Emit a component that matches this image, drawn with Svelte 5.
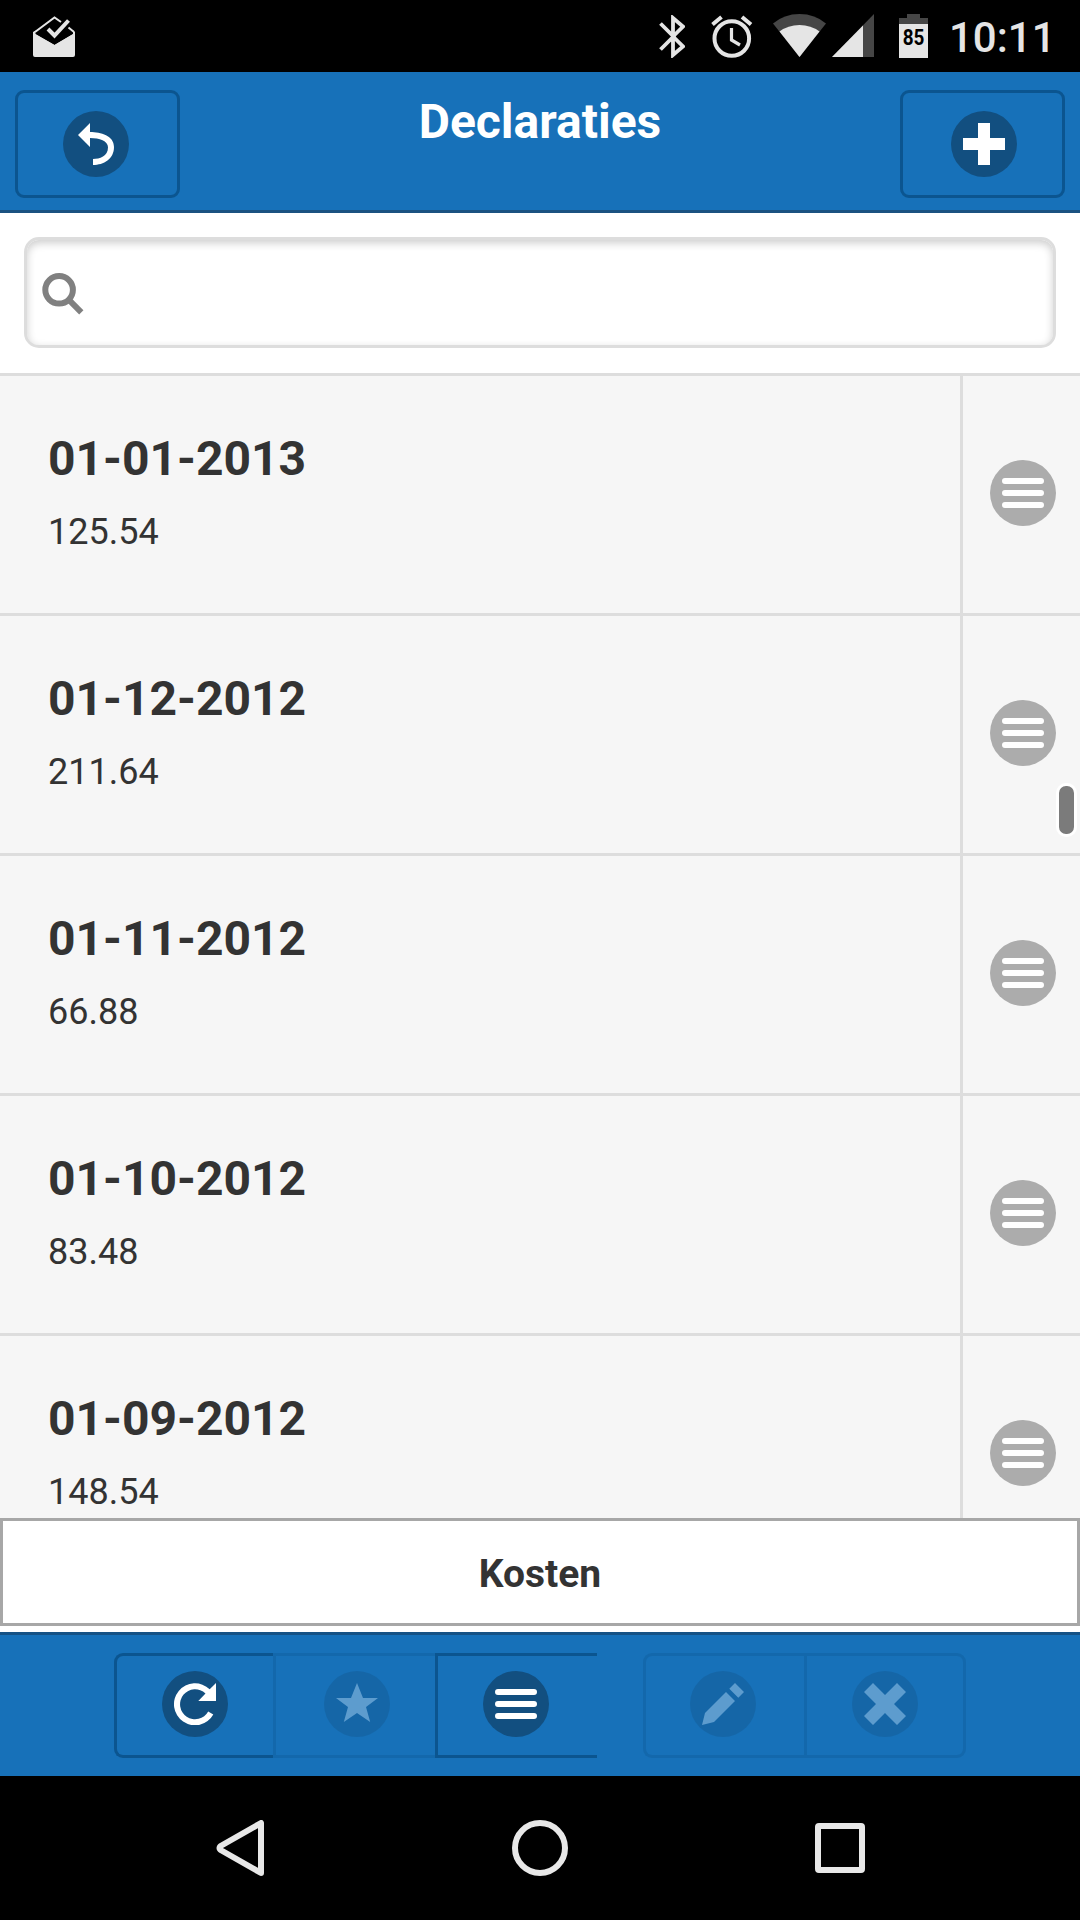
<script lang="ts">
  interface Declaration {
    date: string;
    amount: string;
  }

  const declarations: Declaration[] = [
    { date: '01-01-2013', amount: '125.54' },
    { date: '01-12-2012', amount: '211.64' },
    { date: '01-11-2012', amount: '66.88' },
    { date: '01-10-2012', amount: '83.48' },
    { date: '01-09-2012', amount: '148.54' },
  ];

  // all paths are drawn on a 14x14 grid
  const icons = {
    back: 'M5,3V0L1,4l4,4V5c3.2,0,6,1,6,3.1C11,11.2,8.2,12,6,12v2c3.6,0,7-2,7-6C13,4.2,8.6,3,5,3z',
    plus: 'M14,5H9V0H5v5H0v4h5v5h4V9h5z',
    bars: 'M1,4h12a1,1,0,0,0,0-2H1a1,1,0,0,0,0,2z M13,6H1a1,1,0,0,0,0,2h12a1,1,0,0,0,0-2z M13,10H1a1,1,0,0,0,0,2h12a1,1,0,0,0,0-2z',
    refresh: 'M14,0l-2.1,2.1A7,7,0,1,0,13.1,10.5l-1.7-1A5,5,0,1,1,10.5,3.5L8.1,6H14z',
    star: 'M14,5H9L7,0L5,5H0l4,3l-1.4,5L7,10l4.4,3L10,8z',
    edit: 'M1,10l-1,4l4-1l7-7L8,3z M11,0L9.1,1.9l3,3L14,3z',
    remove: 'M14,3l-3-3L7,4L3,0L0,3l4,4l-4,4l3,3l4-4l4,4l3-3l-4-4z',
  };

  type IconName = keyof typeof icons;

  let query = $state('');

  let visible = $derived(
    declarations.filter((d) => d.date.includes(query) || d.amount.includes(query))
  );
</script>

{#snippet icon(name: IconName)}
  <span class="disc">
    <svg viewBox="0 0 14 14" aria-hidden="true"><path d={icons[name]} /></svg>
  </span>
{/snippet}

<div class="screen">
  <div class="status-bar">
    <svg class="mail" viewBox="0 0 42 42" aria-hidden="true">
      <path d="M0 17 21.500 29 42 17V39q0 2-2 2H2q-2 0-2-2z" />
      <path d="M2 16 21.500 1.500 28 6M35.500 11.500 41 16" fill="none" stroke="#e5e5e5" stroke-width="2" />
      <path d="M0 16 2.500 14.500 2.500 18 21.500 29 40 18 40 14.500 42 16V30H0z" />
      <path d="M15 13 21.500 19.500 35.500 4.500" fill="none" stroke="#e5e5e5" stroke-width="4" />
    </svg>
    <span class="spacer"></span>
    <svg class="bluetooth" viewBox="0 0 26 43" aria-hidden="true">
      <path d="M1.500 8.500 14.500 21.500 1.500 34.500M14 21.500 24 11.500 14 3V40L24 31.500 14 21.500" fill="none" stroke="#e5e5e5" stroke-width="3.800" />
    </svg>
    <svg class="alarm" viewBox="0 0 42 43" aria-hidden="true">
      <circle cx="20.800" cy="23.500" r="17.300" fill="none" stroke="#e5e5e5" stroke-width="4" />
      <path d="M1.500 9.500 10.500 2M31 2 40 9.500" stroke="#e5e5e5" stroke-width="4" />
      <path d="M20.500 13V25L29 30" fill="none" stroke="#e5e5e5" stroke-width="3.200" />
    </svg>
    <svg class="wifi" viewBox="0 0 53 43" aria-hidden="true">
      <path class="dim" d="M26.500 43 0 9.500Q11 0 26.500 0T53 9.500z" />
      <path d="M26.500 43 6.500 17.500Q15 11 26.500 11T46.500 17.500z" />
    </svg>
    <svg class="signal" viewBox="0 0 42 43" aria-hidden="true">
      <path class="dim" d="M42 0V43H0z" />
      <path d="M31 11.500V43H0z" />
    </svg>
    <div class="battery">
      <svg viewBox="0 0 29 44" aria-hidden="true">
        <path class="dim" d="M0 10V4H8V0H21V4H29V10z" />
        <path d="M0 10H29V44H0z" />
      </svg>
      <span>85</span>
    </div>
    <time>10:11</time>
  </div>

  <header>
    <button class="header-btn" aria-label="Terug">{@render icon('back')}</button>
    <h1>Declaraties</h1>
    <button class="header-btn add" aria-label="Toevoegen">{@render icon('plus')}</button>
  </header>

  <div class="search">
    <label>
      <svg viewBox="0 0 14 14" aria-hidden="true">
        <circle cx="5.700" cy="5.600" r="4.600" />
        <path d="M8.900 8.900 13.100 13.100" />
      </svg>
      <input type="text" aria-label="Zoeken" bind:value={query} />
    </label>
  </div>

  <div class="list-wrap">
    <ul>
      {#each visible as item (item.date)}
        <li>
          <div class="details">
            <h2>{item.date}</h2>
            <p>{item.amount}</p>
          </div>
          <button class="row-menu" aria-label="Menu">{@render icon('bars')}</button>
        </li>
      {/each}
    </ul>
    <div class="scroll-thumb"></div>
  </div>

  <div class="tab-wrap">
    <button class="tab">Kosten</button>
  </div>

  <footer>
    <div class="group">
      <button class="tool refresh" aria-label="Vernieuwen">{@render icon('refresh')}</button>
      <button class="tool favorite" disabled aria-label="Favoriet">{@render icon('star')}</button>
      <button class="tool" aria-label="Menu">{@render icon('bars')}</button>
    </div>
    <div class="group">
      <button class="tool edit" disabled aria-label="Bewerken">{@render icon('edit')}</button>
      <button class="tool remove" disabled aria-label="Verwijderen">{@render icon('remove')}</button>
    </div>
  </footer>

  <nav>
    <svg viewBox="0 0 56 56" aria-hidden="true">
      <path d="M45 3V53L5.500 30.500Q1.500 28 5.500 25.500z" />
    </svg>
    <svg viewBox="0 0 56 56" aria-hidden="true">
      <circle cx="28" cy="28" r="25" />
    </svg>
    <svg class="recent" viewBox="0 0 56 56" aria-hidden="true">
      <rect x="6" y="6" width="44" height="44" rx="1" />
    </svg>
  </nav>
</div>

<style>
  :global(body) {
    margin: 0;
  }

  .screen {
    display: flex;
    flex-direction: column;
    width: 1080px;
    height: 1920px;
    overflow: hidden;
    background: #fff;
    color: #333;
    font-family: Roboto, sans-serif;
  }

  .screen * {
    box-sizing: border-box;
  }

  svg {
    display: block;
    flex: none;
  }

  button {
    margin: 0;
    padding: 0;
    background: none;
    font: inherit;
    color: inherit;
  }

  .status-bar {
    display: flex;
    flex: none;
    align-items: flex-start;
    height: 72px;
    padding: 14px 31px 0 33px;
    background: #000;
    fill: #e5e5e5;
  }

  .spacer {
    flex: 1;
  }

  .dim {
    fill: #464646;
  }

  .mail {
    width: 42px;
    height: 42px;
    margin-top: 2px;
  }

  .bluetooth {
    width: 26px;
    height: 43px;
    margin: 1px 26px 0 0;
  }

  .alarm {
    width: 42px;
    height: 43px;
    margin: 1px 20px 0 0;
  }

  .wifi {
    width: 53px;
    height: 43px;
    margin-right: 6px;
  }

  .signal {
    width: 42px;
    height: 43px;
    margin-right: 25px;
  }

  .battery {
    position: relative;
    width: 29px;
    height: 44px;
    margin-right: 21px;
  }

  .battery span {
    position: absolute;
    inset: 11px 0 auto;
    font-size: 22px;
    font-weight: 700;
    line-height: 25px;
    text-align: center;
    color: #000;
    transform: scaleX(0.86);
  }

  time {
    width: 100px;
    margin-top: 1px;
    font-size: 42px;
    font-weight: 500;
    line-height: 46px;
    color: #e5e5e5;
    white-space: nowrap;
  }

  header {
    display: flex;
    flex: none;
    justify-content: space-between;
    height: 141px;
    padding: 18px 15px 0;
    background: #1771b9;
    border-bottom: 3px solid #1b5281;
  }

  h1 {
    margin: 4px 0 0;
    font-size: 48px;
    font-weight: 700;
    line-height: 56px;
    color: #fff;
  }

  .header-btn {
    display: flex;
    align-items: center;
    width: 165px;
    height: 108px;
    padding-left: 45px;
    border: 3px solid #0b5590;
    border-radius: 9px;
  }

  .header-btn.add {
    padding-left: 48px;
  }

  .disc {
    display: flex;
    flex: none;
    align-items: center;
    justify-content: center;
    width: 66px;
    height: 66px;
    border-radius: 50%;
    background: #124f80;
  }

  .disc svg {
    width: 42px;
    height: 42px;
    fill: #fff;
  }

  .search {
    flex: none;
    height: 160px;
    padding: 24px 24px 0;
  }

  .search label {
    display: flex;
    align-items: center;
    height: 111px;
    padding-left: 15px;
    border: 3px solid #ddd;
    border-radius: 15px;
    box-shadow: inset 0 3px 9px rgba(0, 0, 0, 0.2);
  }

  .search svg {
    width: 42px;
    height: 42px;
    margin-top: 3px;
    fill: none;
    stroke: #808080;
    stroke-width: 2;
  }

  .search input {
    flex: 1;
    height: 90px;
    padding: 0 18px;
    border: 0;
    outline: 0;
    background: none;
    font: inherit;
    font-size: 48px;
  }

  .list-wrap {
    position: relative;
    flex: none;
    height: 1145px;
    overflow: hidden;
  }

  ul {
    margin: 0;
    padding: 0;
    list-style: none;
  }

  li {
    display: flex;
    height: 240px;
    border-top: 3px solid #ddd;
    background: #f6f6f6;
  }

  .details {
    flex: 1;
    padding: 55px 48px 0;
  }

  h2 {
    margin: 0;
    font-size: 48px;
    font-weight: 700;
    line-height: 56px;
  }

  p {
    margin: 24px 0 0;
    font-size: 36px;
    line-height: 42px;
  }

  .row-menu {
    display: flex;
    align-items: center;
    width: 120px;
    padding: 0 0 3px 27px;
    border: 0;
    border-left: 3px solid #ddd;
  }

  .row-menu .disc {
    background: #acacac;
  }

  .scroll-thumb {
    position: absolute;
    top: 410px;
    right: 3px;
    width: 21px;
    height: 54px;
    border: 3px solid #fff;
    border-radius: 10px;
    background: #7b7b7b;
  }

  .tab-wrap {
    flex: none;
    height: 114px;
  }

  .tab {
    display: block;
    width: 100%;
    height: 108px;
    padding-top: 3px;
    border: 3px solid #a7a7a7;
    background: #fff;
    font-size: 39px;
    font-weight: 700;
  }

  footer {
    display: flex;
    flex: none;
    gap: 46px;
    height: 144px;
    padding: 18px 0 0 114px;
    background: #1771b9;
    border-top: 3px solid #165285;
  }

  .group {
    display: flex;
    height: 105px;
  }

  .tool {
    display: flex;
    align-items: center;
    width: 162px;
    padding: 0 0 3px 45px;
    border: 3px solid #0b5590;
    border-right-width: 0;
  }

  .tool:disabled {
    opacity: 0.3;
  }

  .refresh {
    width: 159px;
    border-radius: 9px 0 0 9px;
  }

  .favorite {
    padding-left: 48px;
  }

  .edit {
    width: 161px;
    padding-left: 44px;
    border-radius: 9px 0 0 9px;
  }

  .remove {
    border-right-width: 3px;
    border-radius: 0 9px 9px 0;
  }

  nav {
    display: flex;
    flex: none;
    gap: 240px;
    height: 144px;
    padding: 44px 0 0 216px;
    background: #000;
  }

  nav svg {
    width: 56px;
    height: 56px;
    fill: none;
    stroke: #e8e8e8;
    stroke-width: 6;
    stroke-linejoin: round;
  }

  .recent {
    margin-left: 4px;
  }
</style>
